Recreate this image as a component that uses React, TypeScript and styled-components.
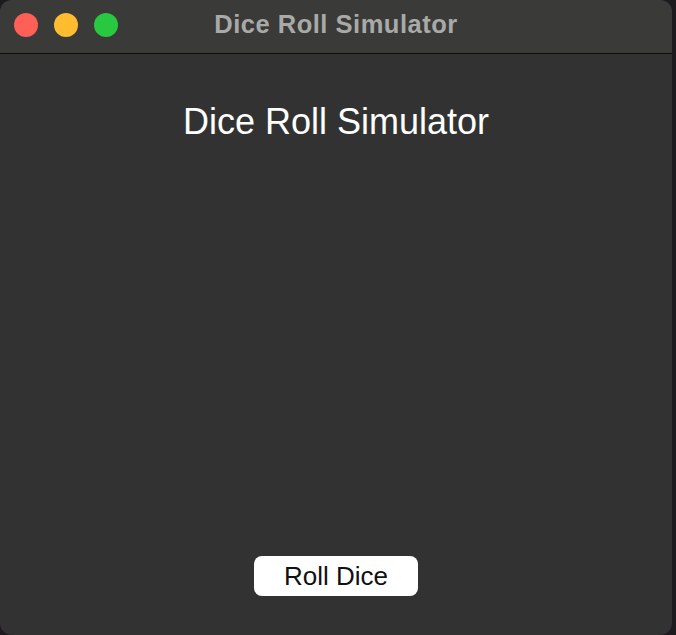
import React from "react";
import styled, { createGlobalStyle } from "styled-components";

const Global = createGlobalStyle`
  html, body { margin: 0; padding: 0; background: #1e1b1f; }
  body { font-family: "Liberation Sans", Arial, sans-serif; }
  #root { width: 676px; height: 635px; }
`;

const Window = styled.div`
  width: 672px;
  height: 635px;
  box-sizing: border-box;
  border-radius: 12px;
  overflow: hidden;
  background: #323232;
  display: flex;
  flex-direction: column;
`;

const TitleBar = styled.div`
  height: 53px;
  flex: none;
  background: #3a3b39;
  border-bottom: 1px solid #0e0e0e;
  position: relative;
  display: flex;
  align-items: center;
  justify-content: center;
`;

const Lights = styled.div`
  position: absolute;
  left: 14px;
  top: 13px;
  display: flex;
  gap: 16px;
`;

const Light = styled.span<{ $c: string }>`
  width: 24px;
  height: 24px;
  border-radius: 50%;
  background: ${(p) => p.$c};
`;

const WindowTitle = styled.div`
  font-weight: 700;
  font-size: 25.5px;
  letter-spacing: 0.5px;
  color: #a9aaa7;
  margin-top: -4px;
`;

const Body = styled.div`
  flex: 1;
  display: flex;
  flex-direction: column;
  align-items: center;
  justify-content: space-between;
  padding: 35px 0 39px;
`;

const Heading = styled.h1`
  margin: 0;
  font-weight: 400;
  font-size: 36px;
  line-height: 66px;
  color: #ffffff;
`;

const RollButton = styled.button`
  width: 164px;
  height: 40px;
  border: none;
  border-radius: 8px;
  background: #ffffff;
  color: #111;
  font-family: "Liberation Sans", Arial, sans-serif;
  font-size: 26px;
  padding: 0;
`;

export default function App() {
  return (
    <>
      <Global />
      <Window>
        <TitleBar>
          <Lights>
            <Light $c="#fe5f57" />
            <Light $c="#febc2e" />
            <Light $c="#28c840" />
          </Lights>
          <WindowTitle>Dice Roll Simulator</WindowTitle>
        </TitleBar>
        <Body>
          <Heading>Dice Roll Simulator</Heading>
          <RollButton>Roll Dice</RollButton>
        </Body>
      </Window>
    </>
  );
}
